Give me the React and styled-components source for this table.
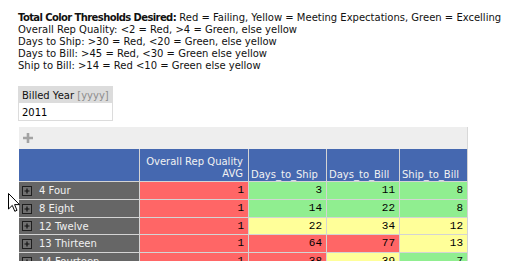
import React from "react";
import styled, { createGlobalStyle } from "styled-components";

const Global = createGlobalStyle`
  * { box-sizing: border-box; }
  html { overflow: hidden; scrollbar-width: none; }
  html::-webkit-scrollbar { display: none; }
  html, body { margin: 0; padding: 0; background: #fff; }
  body { font-family: "DejaVu Sans", Verdana, sans-serif; font-size: 10px; color: #111; }
`;

const Page = styled.div`
  position: relative;
  padding: 12px 0 0 18px;
`;

const Notes = styled.div`
  line-height: 12px;
  white-space: nowrap;
`;

const Line = styled.div``;

const Strong = styled.b`
  font-weight: bold;
  letter-spacing: -0.6px;
`;

const YearBox = styled.div`
  margin-top: 14px;
  width: 95px;
  border: 1px solid #dcdcdc;
`;

const YearHead = styled.div`
  background: #dcdcdc;
  height: 16px;
  padding: 2px 3px 0;
  line-height: 14px;
  color: #111;
  white-space: nowrap;
`;

const Hint = styled.span`
  color: #8c8c8c;
`;

const YearValue = styled.div`
  height: 17px;
  padding: 2px 3px 0;
  line-height: 15px;
  color: #000;
`;

const Grid = styled.div`
  position: relative;
  margin-top: 5px;
  padding: 1px 0 0 1px;
  &::before {
    content: "";
    position: absolute;
    z-index: -1;
    left: 0;
    top: 0;
    width: 461px;
    height: 32px;
    border: 1px solid #dcdcdc;
  }
`;

const Toolbar = styled.div`
  width: 449px;
  height: 22px;
  background: #eeeeee;
  border-right: 1px solid #d8d8d8;
  display: flex;
  align-items: center;
  padding-left: 3px;
`;

const Table = styled.table`
  border-collapse: separate;
  border-spacing: 0;
  table-layout: fixed;
  width: 449px;
`;

const Col = styled.col`
  width: ${(p) => p.$w}px;
`;

const Th = styled.th`
  background: #4568b0;
  color: #f2f2f2;
  font-weight: normal;
  height: 33px;
  vertical-align: bottom;
  text-align: ${(p) => (p.$right ? "right" : "left")};
  padding: 0 ${(p) => (p.$right ? 5 : 0)}px ${(p) => (p.$right ? 1 : 0)}px
    ${(p) => (p.$right ? 0 : 2)}px;
  line-height: 12px;
  border-right: 1px solid #d4d4d4;
  border-bottom: 1px solid #d4d4d4;
  white-space: ${(p) => (p.$right ? "normal" : "nowrap")};
`;

const LabelCell = styled.td`
  background: #666666;
  color: #f0f0f0;
  height: 16.75px;
  padding: 1px 0 0 3px;
  line-height: 15.75px;
  border-right: 1px solid #d4d4d4;
  border-bottom: 1px solid #d4d4d4;
  white-space: nowrap;
  overflow: hidden;
`;

const Label = styled.span`
  display: flex;
  align-items: center;
  gap: 7px;
`;

const colors = { r: "#ff6666", g: "#90ee90", y: "#ffff99" };

const ValueCell = styled.td`
  background: ${(p) => colors[p.$c]};
  color: #000;
  font-family: "Liberation Mono", "Courier New", monospace;
  font-size: 11px;
  text-align: right;
  height: 16.75px;
  padding: 1px 4px 0 0;
  line-height: 15.75px;
  border-right: 1px solid #d4d4d4;
  border-bottom: 1px solid #d4d4d4;
`;

const Cursor = styled.svg`
  position: absolute;
  left: 8px;
  top: 193px;
`;

const ExpandIcon = () => (
  <svg width="10" height="10" viewBox="0 0 10 10">
    <rect x="0.5" y="0.5" width="9" height="9" fill="#707070" stroke="#1e1e1e" />
    <path d="M2.5 5 H7.5 M5 2.5 V7.5" stroke="#111" strokeWidth="1.2" />
  </svg>
);

const PlusIcon = () => (
  <svg width="12" height="12" viewBox="0 0 12 12">
    <path d="M1 6 H11 M6 1 V11" stroke="#a3a3a3" strokeWidth="2.6" />
  </svg>
);

const rows = [
  { label: "4 Four", v: [["1", "r"], ["3", "g"], ["11", "g"], ["8", "g"]] },
  { label: "8 Eight", v: [["1", "r"], ["14", "g"], ["22", "g"], ["8", "g"]] },
  { label: "12 Twelve", v: [["1", "r"], ["22", "y"], ["34", "y"], ["12", "y"]] },
  { label: "13 Thirteen", v: [["1", "r"], ["64", "r"], ["77", "r"], ["13", "y"]] },
  { label: "14 Fourteen", v: [["1", "r"], ["38", "r"], ["39", "y"], ["7", "g"]] },
];

export default function App() {
  return (
    <Page>
      <Global />
      <Notes>
        <Line>
          <Strong>Total Color Thresholds Desired:</Strong> Red = Failing, Yellow = Meeting
          Expectations, Green = Excelling
        </Line>
        <Line>Overall Rep Quality: &lt;2 = Red, &gt;4 = Green, else yellow</Line>
        <Line>Days to Ship: &gt;30 = Red, &lt;20 = Green, else yellow</Line>
        <Line>Days to Bill: &gt;45 = Red, &lt;30 = Green else yellow</Line>
        <Line>Ship to Bill: &gt;14 = Red &lt;10 = Green else yellow</Line>
      </Notes>
      <YearBox>
        <YearHead>
          Billed Year <Hint>[yyyy]</Hint>
        </YearHead>
        <YearValue>2011</YearValue>
      </YearBox>
      <Grid>
        <Toolbar>
          <PlusIcon />
        </Toolbar>
        <Table>
          <colgroup>
            <Col $w={121} />
            <Col $w={109} />
            <Col $w={78} />
            <Col $w={73} />
            <Col $w={68} />
          </colgroup>
          <thead>
            <tr>
              <Th />
              <Th $right>Overall Rep Quality AVG</Th>
              <Th>Days_to_Ship</Th>
              <Th>Days_to_Bill</Th>
              <Th>Ship_to_Bill</Th>
            </tr>
          </thead>
          <tbody>
            {rows.map((r) => (
              <tr key={r.label}>
                <LabelCell>
                  <Label>
                    <ExpandIcon />
                    {r.label}
                  </Label>
                </LabelCell>
                {r.v.map(([n, c], i) => (
                  <ValueCell key={i} $c={c}>
                    {n}
                  </ValueCell>
                ))}
              </tr>
            ))}
          </tbody>
        </Table>
      </Grid>
      <Cursor width="13" height="20" viewBox="0 0 13 20">
        <path
          d="M0.5 0.5 L0.5 16 L4.3 12.4 L6.8 18.3 L9 17.3 L6.6 11.6 L11.5 11.6 Z"
          fill="#fff"
          stroke="#000"
          strokeWidth="1"
          strokeLinejoin="miter"
        />
      </Cursor>
    </Page>
  );
}
